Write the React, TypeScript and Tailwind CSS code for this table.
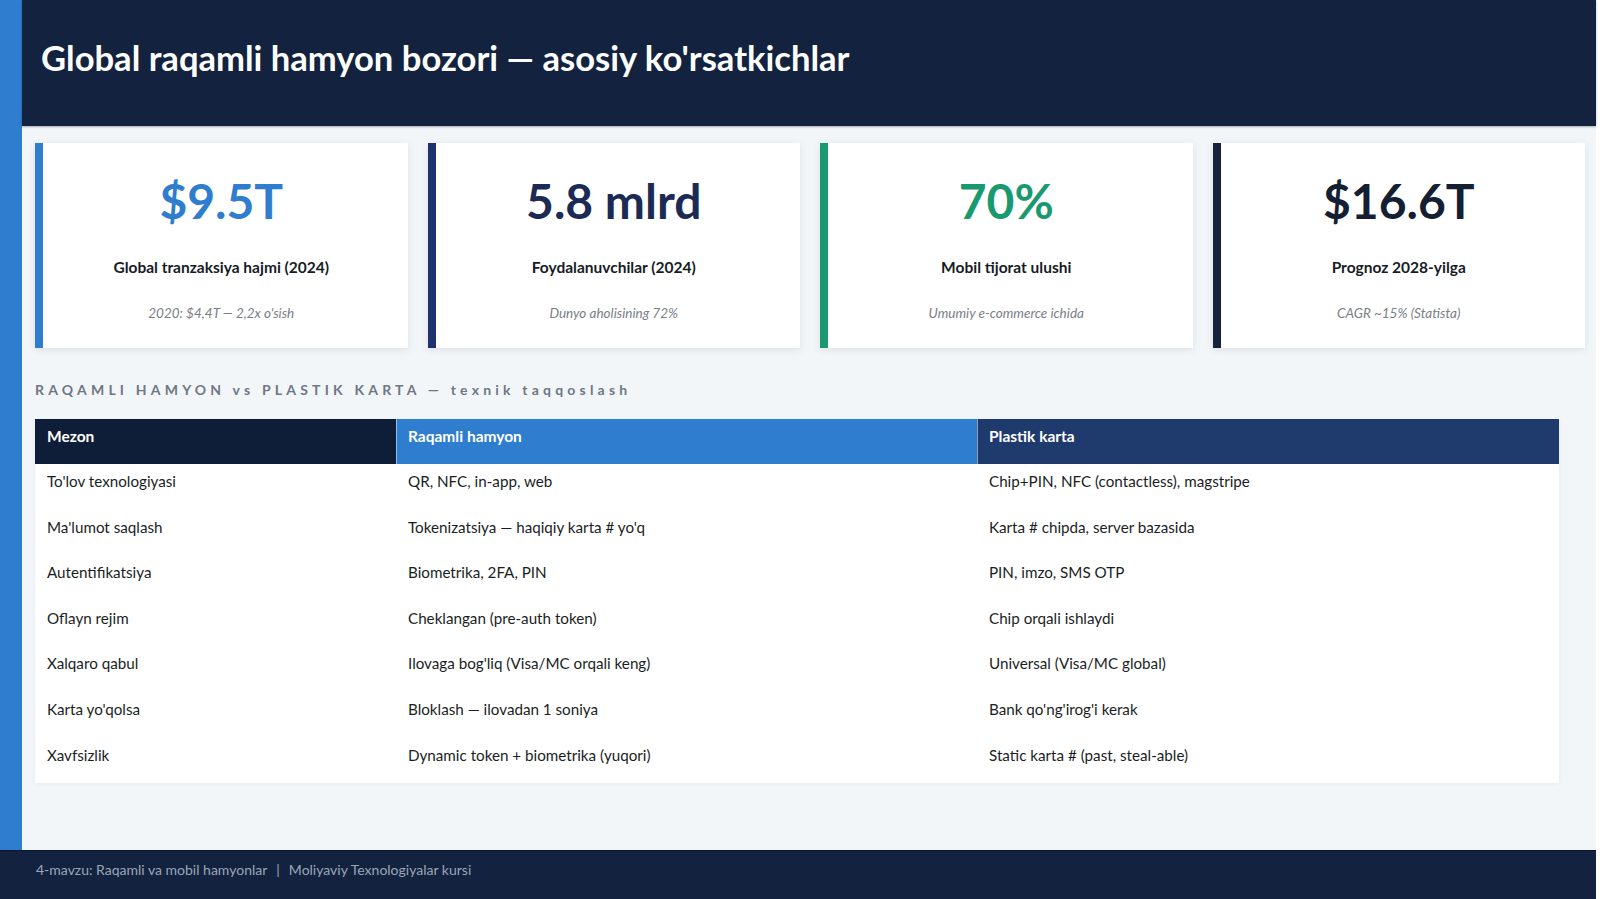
import React from 'react';

type Stat = {
  value: string;
  label: string;
  note: string;
  accent: string;
  valueColor: string;
};

const stats: Stat[] = [
  {
    value: '$9.5T',
    label: 'Global tranzaksiya hajmi (2024)',
    note: "2020: $4,4T — 2,2x o'sish",
    accent: 'border-[#2e7dcf]',
    valueColor: 'text-[#2e7dcf]',
  },
  {
    value: '5.8 mlrd',
    label: 'Foydalanuvchilar (2024)',
    note: 'Dunyo aholisining 72%',
    accent: 'border-[#1e326b]',
    valueColor: 'text-[#1c2b55]',
  },
  {
    value: '70%',
    label: 'Mobil tijorat ulushi',
    note: 'Umumiy e-commerce ichida',
    accent: 'border-[#1a9870]',
    valueColor: 'text-[#199a6e]',
  },
  {
    value: '$16.6T',
    label: 'Prognoz 2028-yilga',
    note: 'CAGR ~15% (Statista)',
    accent: 'border-[#17233a]',
    valueColor: 'text-[#141f33]',
  },
];

const rows: [string, string, string][] = [
  ["To'lov texnologiyasi", 'QR, NFC, in-app, web', 'Chip+PIN, NFC (contactless), magstripe'],
  ["Ma'lumot saqlash", "Tokenizatsiya — haqiqiy karta # yo'q", 'Karta # chipda, server bazasida'],
  ['Autentifikatsiya', 'Biometrika, 2FA, PIN', 'PIN, imzo, SMS OTP'],
  ['Oflayn rejim', 'Cheklangan (pre-auth token)', 'Chip orqali ishlaydi'],
  ['Xalqaro qabul', "Ilovaga bog'liq (Visa/MC orqali keng)", 'Universal (Visa/MC global)'],
  ["Karta yo'qolsa", 'Bloklash — ilovadan 1 soniya', "Bank qo'ng'irog'i kerak"],
  ['Xavfsizlik', 'Dynamic token + biometrika (yuqori)', 'Static karta # (past, steal-able)'],
];

const StatCard: React.FC<{ stat: Stat }> = ({ stat }) => (
  <div
    className={`flex flex-col items-center h-[205px] pr-[8px] bg-white border-l-[8px] ${stat.accent} shadow-[0_2px_8px_rgba(15,30,60,0.10)]`}
  >
    <div className={`mt-[34px] text-[48px] leading-none font-bold ${stat.valueColor}`}>{stat.value}</div>
    <div className="mt-[32px] text-[15.5px] leading-[20px] font-bold text-[#161c26]">{stat.label}</div>
    <div className="mt-[27px] text-[13.5px] leading-[18px] italic text-[#7a7e86]">{stat.note}</div>
  </div>
);

const App: React.FC = () => {
  return (
    <div className="w-[1600px] h-[899px] bg-white font-['Lato',sans-serif] overflow-hidden">
      <div className="w-[1596px] h-[899px] flex flex-col bg-[#f3f6f9]">
        <div className="flex flex-1">
          {/* Accent stripe */}
          <div className="w-[22px] shrink-0 bg-[#2e7dcf]" />

          <div className="flex-1 flex flex-col">
            {/* Header */}
            <header className="h-[126px] shrink-0 bg-[#13233f] pl-[19px] pt-[37px] shadow-[0_1px_2px_rgba(0,0,0,0.3)]">
              <h1 className="text-[34.6px] leading-[42px] font-bold text-white">
                Global raqamli hamyon bozori — asosiy ko'rsatkichlar
              </h1>
            </header>

            <main className="pl-[13px] pr-[11px] pt-[17px]">
              {/* Stat cards */}
              <div className="grid grid-cols-4 gap-[20px]">
                {stats.map((s) => (
                  <StatCard key={s.value} stat={s} />
                ))}
              </div>

              {/* Comparison */}
              <h2 className="mt-[32px] mb-[19px] text-[14px] leading-[20px] font-bold tracking-[0.3em] text-[#6e7786]">
                RAQAMLI HAMYON vs PLASTIK KARTA — texnik taqqoslash
              </h2>

              <div className="w-[1524px] bg-white shadow-[0_1px_4px_rgba(15,30,60,0.06)] text-[15.2px] leading-[20px]">
                <div className="grid grid-cols-[361px_581px_1fr] h-[45px] text-white font-bold text-[15.5px]">
                  <div className="bg-[#0f1e38] px-[12px] pt-[7px]">Mezon</div>
                  <div className="bg-[#2e7dcf] border-l border-white/50 px-[11px] pt-[7px]">Raqamli hamyon</div>
                  <div className="bg-[#1f3a6d] border-l border-white/50 px-[11px] pt-[7px]">Plastik karta</div>
                </div>
                {rows.map((r) => (
                  <div key={r[0]} className="grid grid-cols-[361px_581px_1fr] h-[45.6px] text-[#1a1e24]">
                    <div className="px-[12px] pt-[7px]">{r[0]}</div>
                    <div className="px-[12px] pt-[7px]">{r[1]}</div>
                    <div className="px-[12px] pt-[7px]">{r[2]}</div>
                  </div>
                ))}
              </div>
            </main>
          </div>
        </div>

        {/* Footer */}
        <footer className="h-[49px] shrink-0 bg-[#13233f] border-t border-[#0a1528] pl-[36px] pt-[9px] text-[14px] leading-[20px] text-[#9aa6b8]">
          4-mavzu: Raqamli va mobil hamyonlar
          <span className="mx-[9px]">|</span>
          Moliyaviy Texnologiyalar kursi
        </footer>
      </div>
    </div>
  );
};

export default App;
